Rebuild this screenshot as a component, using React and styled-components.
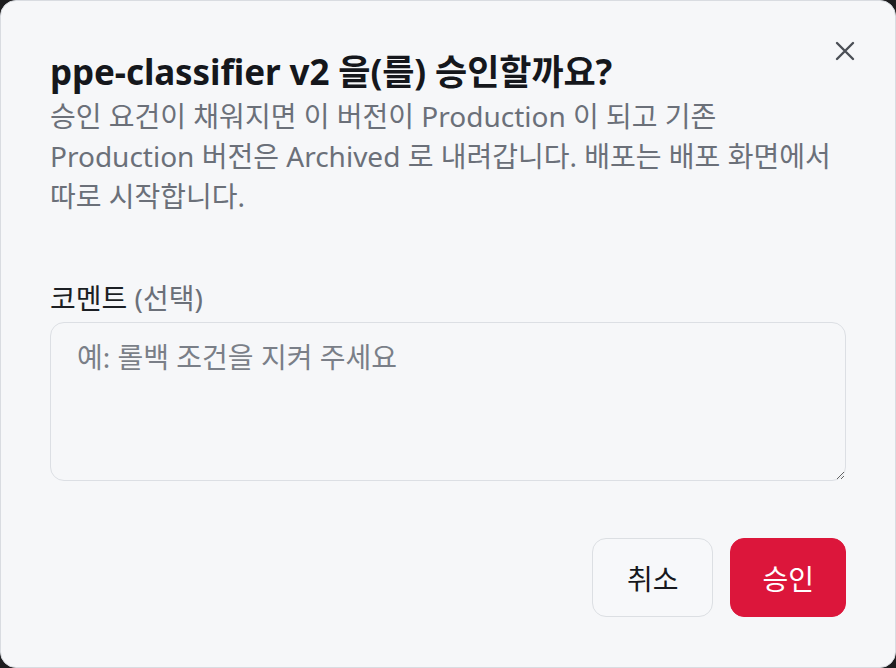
import React from "react";
import styled, { createGlobalStyle } from "styled-components";

const Global = createGlobalStyle`
  html, body { margin: 0; padding: 0; background: #1d1d1f; }
  body { font-family: "Noto Sans", "Noto Sans CJK KR", sans-serif; }
  * { box-sizing: border-box; }
`;

const Card = styled.div`
  position: relative;
  width: 896px;
  height: 668px;
  background: #f6f7f9;
  border: 1px solid #d9dce1;
  border-radius: 16px;
  padding: 49px 49px 50px 49px;
  display: flex;
  flex-direction: column;
`;

const Header = styled.div`
  display: flex;
  justify-content: space-between;
  align-items: flex-start;
`;

const Title = styled.h2`
  margin: 0;
  font-size: 35px;
  font-weight: 700;
  line-height: 44px;
  color: #15171c;
  letter-spacing: -0.1px;
`;

const CloseBtn = styled.button`
  position: absolute;
  top: 36px;
  right: 36px;
  width: 28px;
  height: 28px;
  border: none;
  background: transparent;
  padding: 0;
  display: flex;
  align-items: center;
  justify-content: center;
  color: #4b4f56;
  cursor: pointer;
`;

const Desc = styled.p`
  margin: 2px 0 0 0;
  font-size: 28px;
  line-height: 40px;
  color: #6b7079;
`;

const Label = styled.label`
  margin-top: 62px;
  font-size: 28px;
  line-height: 40px;
  color: #1c1f24;
`;

const Optional = styled.span`
  color: #6b7079;
`;

const TextArea = styled.textarea`
  margin-top: 4px;
  width: 100%;
  height: 159px;
  border: 1px solid #dcdfe4;
  border-radius: 14px;
  background: #f6f7f9;
  padding: 14px 26px;
  font-family: "Noto Sans", "Noto Sans CJK KR", sans-serif;
  font-size: 28px;
  line-height: 40px;
  color: #1c1f24;
  resize: vertical;
  outline: none;
  &::placeholder { color: #7a7f88; }
`;

const Footer = styled.div`
  margin-top: 57px;
  display: flex;
  justify-content: flex-end;
  gap: 17px;
`;

const Button = styled.button`
  height: 79px;
  padding: 0 ${(p) => (p.$primary ? "31px" : "34px")};
  border-radius: 14px;
  font-family: "Noto Sans", "Noto Sans CJK KR", sans-serif;
  font-size: 28px;
  cursor: pointer;
  border: 1px solid ${(p) => (p.$primary ? "#dc163b" : "#dcdfe3")};
  background: ${(p) => (p.$primary ? "#dc163b" : "#f7f8fa")};
  color: ${(p) => (p.$primary ? "#ffffff" : "#16181d")};
`;

export default function App() {
  return (
    <>
      <Global />
      <Card>
        <Header>
          <Title>ppe-classifier v2 을(를) 승인할까요?</Title>
        </Header>
        <CloseBtn aria-label="닫기">
          <svg width="22" height="22" viewBox="0 0 22 22" fill="none" stroke="currentColor" strokeWidth="2.4" strokeLinecap="round">
            <path d="M3 3 L19 19 M19 3 L3 19" />
          </svg>
        </CloseBtn>
        <Desc>
          승인 요건이 채워지면 이 버전이 Production 이 되고 기존 Production 버전은 Archived 로 내려갑니다. 배포는 배포 화면에서 따로 시작합니다.
        </Desc>
        <Label>
          코멘트 <Optional>(선택)</Optional>
        </Label>
        <TextArea placeholder="예: 롤백 조건을 지켜 주세요" />
        <Footer>
          <Button>취소</Button>
          <Button $primary>승인</Button>
        </Footer>
      </Card>
    </>
  );
}
